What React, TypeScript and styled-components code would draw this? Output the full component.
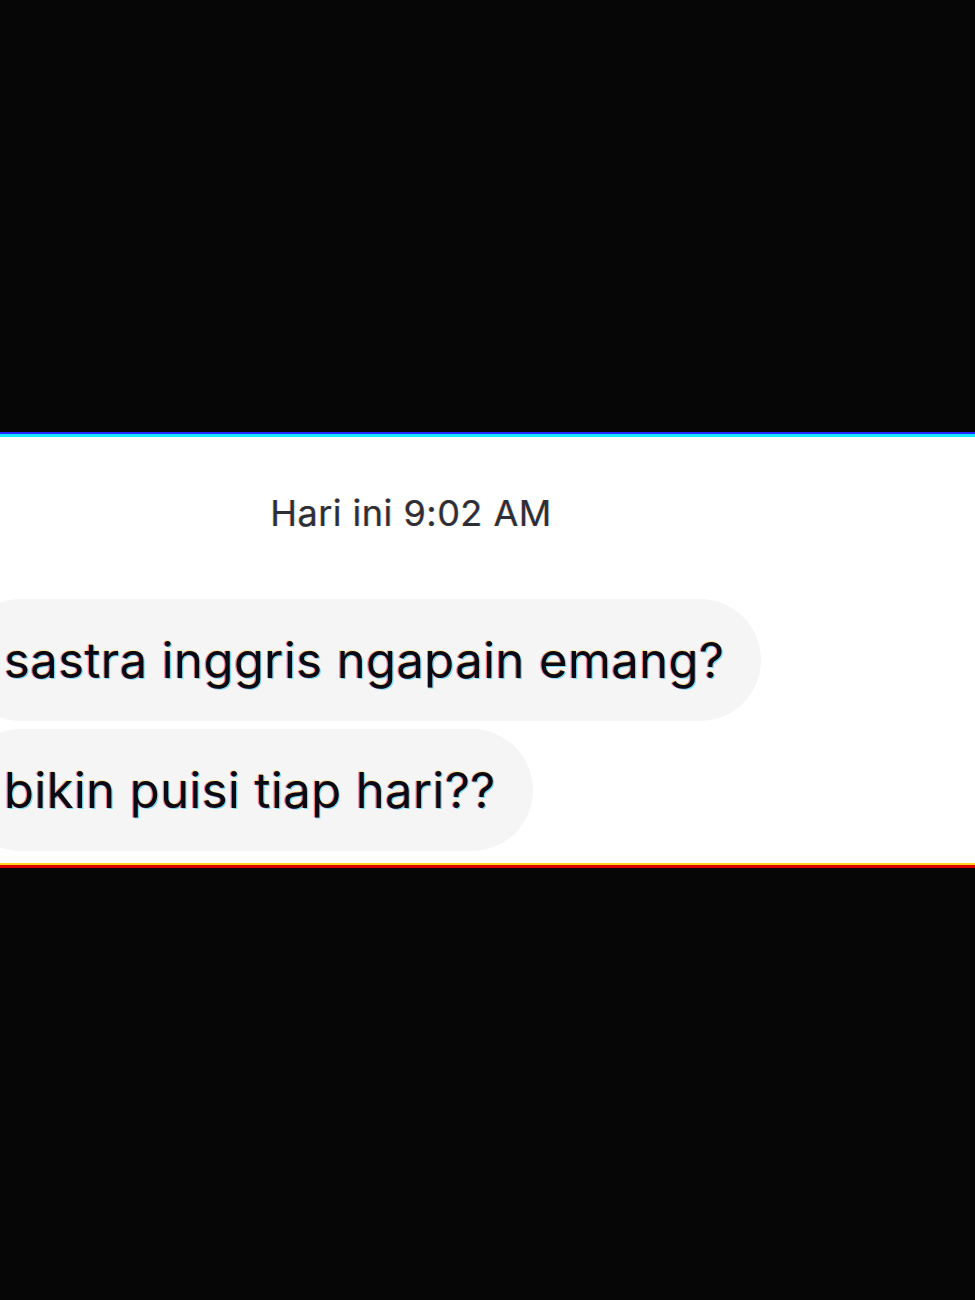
import styled, { createGlobalStyle } from 'styled-components';

const GlobalStyle = createGlobalStyle`
  html, body {
    margin: 0;
    padding: 0;
    background: #060606;
  }
  body {
    font-family: Inter, 'Liberation Sans', sans-serif;
    overflow: hidden;
  }
`;

const Screen = styled.div`
  width: 975px;
  height: 1300px;
  background: #060606;
  display: flex;
  flex-direction: column;
  padding-top: 437px;
  box-sizing: border-box;
  overflow: hidden;
`;

const Panel = styled.div`
  background: #ffffff;
  height: 426px;
  box-sizing: border-box;
  padding: 56px 0 12px;
  display: flex;
  flex-direction: column;
  box-shadow:
    0 -3px 0 #16e8ff,
    0 -5px 0 #2424ff,
    0 2px 0 #ffd21a,
    0 5px 0 #d80000;
`;

const Stamp = styled.div`
  text-align: center;
  padding-right: 153px;
  font-size: 36px;
  line-height: 40px;
  letter-spacing: 0.5px;
  color: #2e2e36;
  text-shadow:
    -0.6px 0 rgba(255, 120, 0, 0.4),
    0.6px 0 rgba(0, 120, 255, 0.4);
`;

const Thread = styled.div`
  display: flex;
  flex-direction: column;
  align-items: flex-start;
  gap: 8px;
  margin-top: 66px;
`;

const Bubble = styled.div`
  margin-left: -40px;
  padding: 0 37px 0 44px;
  height: 122px;
  display: flex;
  align-items: center;
  background: #f5f5f6;
  border-radius: 61px;
  font-size: 49px;
  letter-spacing: 0.4px;
  color: #0a0a14;
  white-space: nowrap;
  text-shadow:
    -1.2px 0 rgba(255, 0, 90, 0.45),
    -0.8px -0.8px rgba(255, 220, 0, 0.4),
    1.2px 1px rgba(0, 200, 255, 0.5);
`;

export default function App() {
  return (
    <Screen>
      <GlobalStyle />
      <Panel>
        <Stamp>Hari ini 9:02 AM</Stamp>
        <Thread>
          <Bubble>sastra inggris ngapain emang?</Bubble>
          <Bubble>bikin puisi tiap hari??</Bubble>
        </Thread>
      </Panel>
    </Screen>
  );
}
